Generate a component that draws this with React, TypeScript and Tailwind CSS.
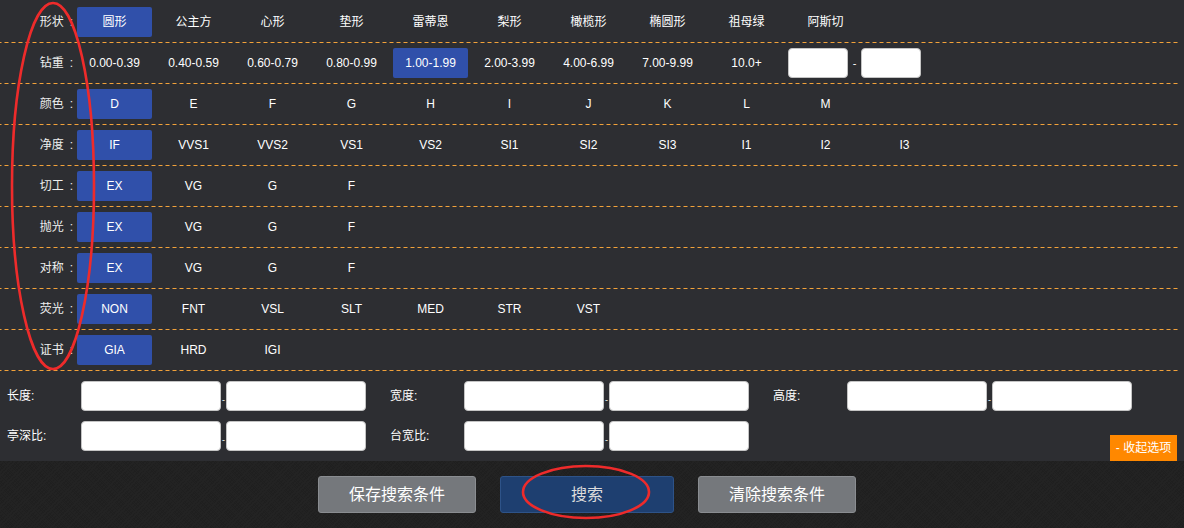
import React from 'react';

type Row = { label: string; items: string[]; active: number; range?: boolean };

const ROWS: Row[] = [
  { label: '形状', items: ['圆形', '公主方', '心形', '垫形', '雷蒂恩', '梨形', '橄榄形', '椭圆形', '祖母绿', '阿斯切'], active: 0 },
  { label: '钻重', items: ['0.00-0.39', '0.40-0.59', '0.60-0.79', '0.80-0.99', '1.00-1.99', '2.00-3.99', '4.00-6.99', '7.00-9.99', '10.0+'], active: 4, range: true },
  { label: '颜色', items: ['D', 'E', 'F', 'G', 'H', 'I', 'J', 'K', 'L', 'M'], active: 0 },
  { label: '净度', items: ['IF', 'VVS1', 'VVS2', 'VS1', 'VS2', 'SI1', 'SI2', 'SI3', 'I1', 'I2', 'I3'], active: 0 },
  { label: '切工', items: ['EX', 'VG', 'G', 'F'], active: 0 },
  { label: '抛光', items: ['EX', 'VG', 'G', 'F'], active: 0 },
  { label: '对称', items: ['EX', 'VG', 'G', 'F'], active: 0 },
  { label: '荧光', items: ['NON', 'FNT', 'VSL', 'SLT', 'MED', 'STR', 'VST'], active: 0 },
  { label: '证书', items: ['GIA', 'HRD', 'IGI'], active: 0 },
];

const SIZES = [
  ['长度:', '宽度:', '高度:'],
  ['亭深比:', '台宽比:'],
];

const font = { fontFamily: '"Liberation Sans", "Noto Sans CJK SC", sans-serif' };

function FilterRow({ row }: { row: Row }) {
  return (
    <div className="flex h-[41px] items-center pb-px bg-[linear-gradient(to_right,#f2a23a_4px,transparent_4px)] bg-[length:7px_1px] bg-bottom bg-repeat-x">
      <div className="w-[77px] shrink-0 pr-[4px] text-right text-[12px] text-[#eeeeee]">
        {row.label}
        <span className="ml-[6px]">:</span>
      </div>
      <div className="flex gap-[4px]">
        {row.items.map((it, i) => (
          <div
            key={it + i}
            className={
              'flex h-[30px] w-[75px] items-center justify-center rounded-[2px] text-[12px] text-white ' +
              (i === row.active ? 'bg-[#3050aa]' : '')
            }
          >
            {it}
          </div>
        ))}
        {row.range && (
          <div className="flex items-center">
            <div className="h-[30px] w-[60px] rounded-[4px] border border-[#c4c4c4] bg-white" />
            <span className="w-[13px] text-center text-[11px] text-white">-</span>
            <div className="h-[30px] w-[60px] rounded-[4px] border border-[#c4c4c4] bg-white" />
          </div>
        )}
      </div>
    </div>
  );
}

function SizeField({ label }: { label: string }) {
  return (
    <div className="flex w-[359px] items-center">
      <span className="w-[74px] text-[12px] text-white">{label}</span>
      <div className="h-[30px] w-[140px] rounded-[4px] border border-[#c4c4c4] bg-white" />
      <span className="mt-[8px] w-[5px] text-center text-[9px] leading-none text-white">-</span>
      <div className="h-[30px] w-[140px] rounded-[4px] border border-[#c4c4c4] bg-white" />
    </div>
  );
}

export default function App() {
  return (
    <div className="relative h-[528px] w-[1184px] overflow-hidden bg-[#212121]" style={font}>
      <div className="bg-[#2d2e32]">
        <div className="w-[1178px] pt-[2px]">
          {ROWS.map((r) => (
            <FilterRow key={r.label} row={r} />
          ))}
        </div>
        <div className="relative flex h-[90px] flex-col gap-[10px] pl-[7px] pt-[10px]">
          {SIZES.map((line, i) => (
            <div key={i} className="flex gap-[24px]">
              {line.map((l) => (
                <SizeField key={l} label={l} />
              ))}
            </div>
          ))}
          <button className="absolute bottom-0 right-[7px] flex h-[26px] w-[67px] items-center justify-center bg-[#ff8800] text-[12px] text-white">
            - 收起选项
          </button>
        </div>
      </div>
      <div className="flex h-[67px] items-center justify-center gap-[24px] pr-[10px] bg-[repeating-linear-gradient(45deg,#222222_0px,#222222_1px,#1f1f1f_1px,#1f1f1f_2px),repeating-linear-gradient(-45deg,#232323_0px,#232323_1px,#1e1e1e_1px,#1e1e1e_3px)] bg-blend-lighten">
        <button className="h-[37px] w-[158px] rounded-[3px] border border-[#8a8d91] bg-[#75787c] text-[16px] text-white">
          保存搜索条件
        </button>
        <button className="h-[37px] w-[174px] rounded-[3px] border border-[#2e5388] bg-[#1e3f70] text-[16px] text-[#dcdcdc]">
          搜索
        </button>
        <button className="h-[37px] w-[158px] rounded-[3px] border border-[#8a8d91] bg-[#75787c] text-[16px] text-white">
          清除搜索条件
        </button>
      </div>
      <svg className="pointer-events-none absolute inset-0" width="1184" height="528">
        <ellipse cx="53" cy="186" rx="41" ry="183" fill="none" stroke="#ee2b2b" strokeWidth="2.6" />
        <ellipse cx="586" cy="492" rx="63" ry="26" fill="none" stroke="#ee2b2b" strokeWidth="2.6" />
      </svg>
    </div>
  );
}
